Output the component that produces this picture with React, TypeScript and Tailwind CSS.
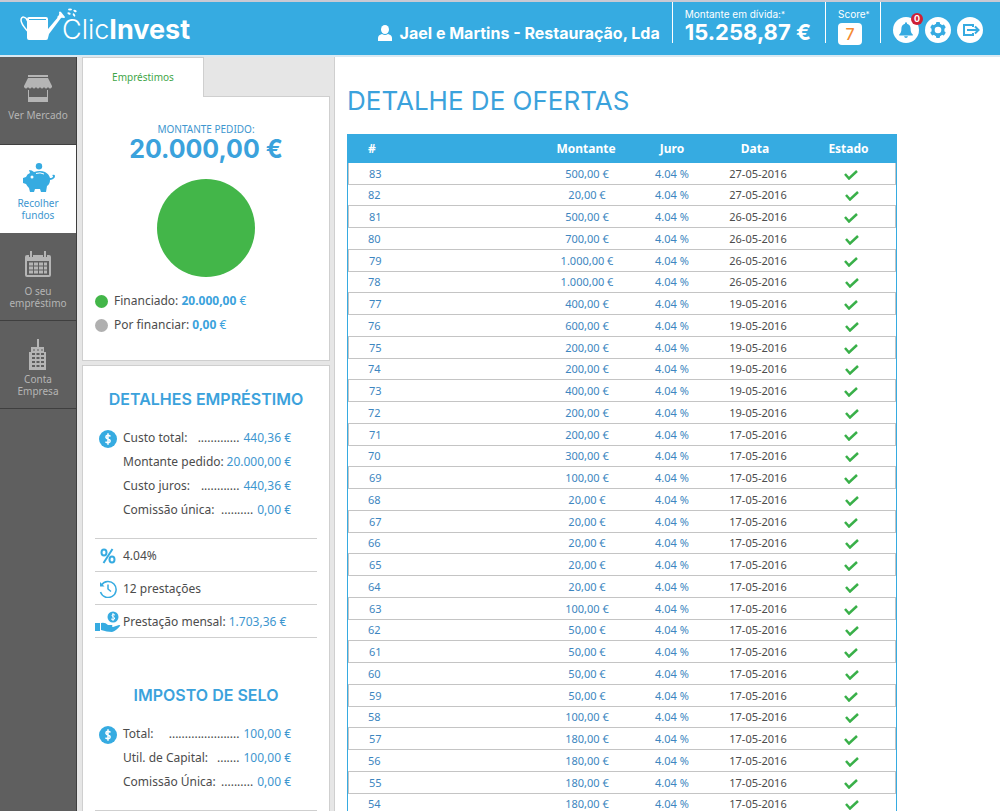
import type { ReactNode } from "react";

const offers: [number, string, string][] = [
  [83, "500,00", "27-05-2016"],
  [82, "20,00", "27-05-2016"],
  [81, "500,00", "26-05-2016"],
  [80, "700,00", "26-05-2016"],
  [79, "1.000,00", "26-05-2016"],
  [78, "1.000,00", "26-05-2016"],
  [77, "400,00", "19-05-2016"],
  [76, "600,00", "19-05-2016"],
  [75, "200,00", "19-05-2016"],
  [74, "200,00", "19-05-2016"],
  [73, "400,00", "19-05-2016"],
  [72, "200,00", "19-05-2016"],
  [71, "200,00", "17-05-2016"],
  [70, "300,00", "17-05-2016"],
  [69, "100,00", "17-05-2016"],
  [68, "20,00", "17-05-2016"],
  [67, "20,00", "17-05-2016"],
  [66, "20,00", "17-05-2016"],
  [65, "20,00", "17-05-2016"],
  [64, "20,00", "17-05-2016"],
  [63, "100,00", "17-05-2016"],
  [62, "50,00", "17-05-2016"],
  [61, "50,00", "17-05-2016"],
  [60, "50,00", "17-05-2016"],
  [59, "50,00", "17-05-2016"],
  [58, "100,00", "17-05-2016"],
  [57, "180,00", "17-05-2016"],
  [56, "180,00", "17-05-2016"],
  [55, "180,00", "17-05-2016"],
  [54, "180,00", "17-05-2016"],
];

function WateringCan() {
  return (
    <svg width="58" height="34" viewBox="0 0 58 34" fill="white" aria-hidden="true">
      <path d="M7 11q0-2 2-2h17q2 0 2 2v10l11-13 2 2-12 16-1 4q0 2-2 2H9q-2 0-2-2z" />
      <path d="M39 4q1-1 2 0l4 5q0 1-1 1-3-1-5 1l-2-2q3-2 2-5z" />
      <path d="M7.500 13C6 8 1 8 1 12c0 4 3 7 6.500 11" fill="none" stroke="white" strokeWidth="1.500" />
      <path d="M9 11.500h17" stroke="#36abe1" strokeWidth="1" />
      <ellipse cx="50" cy="1.500" rx="2" ry="1" />
      <ellipse cx="55" cy="3" rx="1.800" ry="1" transform="rotate(25 55 3)" />
      <ellipse cx="49" cy="5.500" rx="1.800" ry="1" transform="rotate(25 49 5.500)" />
      <ellipse cx="54" cy="7" rx="1" ry="1.800" transform="rotate(-35 54 7)" />
    </svg>
  );
}

function UserIcon() {
  return (
    <svg width="14" height="16" viewBox="0 0 14 16" fill="white" aria-hidden="true">
      <ellipse cx="7" cy="4.500" rx="4" ry="4.500" />
      <path d="M0 16v-3q0-3 4-4 3 2 6 0 4 1 4 4v3z" />
    </svg>
  );
}

function BellIcon() {
  return (
    <svg width="26" height="26" viewBox="0 0 26 26" aria-hidden="true">
      <path
        d="M12 5.500h2v1.200c2.400.6 3.600 2.400 3.600 5 0 3.200.6 4.500 2.200 5.800v1H6.200v-1c1.600-1.300 2.200-2.600 2.200-5.800 0-2.600 1.200-4.400 3.600-5zM11 19.300h4q-.5 1.700-2 1.700t-2-1.700z"
        fill="#36abe1"
      />
    </svg>
  );
}

function GearIcon() {
  return (
    <svg width="26" height="26" viewBox="0 0 26 26" aria-hidden="true">
      <g fill="#36abe1">
        <circle cx="13" cy="13" r="6.500" />
        <rect x="11" y="5" width="4" height="16" rx="1" />
        <rect x="11" y="5" width="4" height="16" rx="1" transform="rotate(60 13 13)" />
        <rect x="11" y="5" width="4" height="16" rx="1" transform="rotate(120 13 13)" />
      </g>
      <circle cx="13" cy="13" r="3.300" fill="white" />
    </svg>
  );
}

function ExitIcon() {
  return (
    <svg width="26" height="26" viewBox="0 0 26 26" fill="none" stroke="#36abe1" strokeWidth="2" aria-hidden="true">
      <path d="M16 10V8H7v10h9v-2M10 13h11M18 9.500l3.500 3.500-3.500 3.500" />
    </svg>
  );
}

function StoreIcon() {
  return (
    <svg width="30" height="28" viewBox="0 0 30 28" fill="currentColor" aria-hidden="true">
      <path d="M5 0h20v2H5zM5 3h20l4 8v1q-2 3-4 0-2 3-4 0-2 3-4 0-2 3-4 0-2 3-4 0-2 3-4 0-2 3-4 0v-1z" />
      <path d="M5 15h1v7h18v-7h1v12H5z" />
    </svg>
  );
}

function PiggyIcon() {
  return (
    <svg width="33" height="30" viewBox="0 0 33 30" fill="#36abe1" aria-hidden="true">
      <circle cx="17" cy="3.200" r="3.200" />
      <path d="M7 7q3 0 5 2 6-2 11 0 4 2 5 6 3 0 3-2l-1-1q3-1 3 1 0 3-5 4 0 4-3 6l-1 6h-5l-1-3h-5l-1 3H8l-1-4q-2-2-3-4l-3-1v-5l3-1q1-3 4-4z" />
      <circle cx="10" cy="14" r="1.500" fill="white" />
      <path d="M14 10.500q4-1.500 8 .5" fill="none" stroke="white" strokeWidth="1" />
    </svg>
  );
}

function CalendarIcon() {
  return (
    <svg width="28" height="27" viewBox="0 0 28 27" aria-hidden="true">
      <path d="M3 4h22q2 0 2 2v18q0 2-2 2H3q-2 0-2-2V6q0-2 2-2z" fill="currentColor" />
      <path d="M7 0v6M21 0v6" stroke="#5f5f5f" strokeWidth="4" />
      <path d="M7 0v6M21 0v6" stroke="currentColor" strokeWidth="2" />
      <path d="M3 10h22v14H3z" fill="#5f5f5f" />
      <path d="M5 13h18M5 17h18M5 21h18" stroke="currentColor" strokeWidth="3" strokeDasharray="4 1" />
    </svg>
  );
}

function BuildingIcon() {
  return (
    <svg width="20" height="32" viewBox="0 0 20 32" aria-hidden="true">
      <path d="M9 0h2v8h5v5h2v18H1V13h2V8h6z" fill="currentColor" />
      <path d="M4 15h12M4 19h12M4 23h12M4 27h12" stroke="#5f5f5f" strokeWidth="2" strokeDasharray="3 1.500" />
      <path d="M5 11h10" stroke="#5f5f5f" strokeWidth="1" strokeDasharray="2 2" />
    </svg>
  );
}

function DollarIcon() {
  return (
    <svg width="18" height="18" viewBox="0 0 18 18" fill="none" stroke="white" aria-hidden="true">
      <circle cx="9" cy="9" r="9" fill="#36abe1" stroke="none" />
      <path d="M11.500 6.300Q9 4.500 7.300 5.800 6 8 9 9q3 1 1.800 3Q9 13.500 6.400 11.800M9 3.300v11.400" strokeWidth="1.500" />
    </svg>
  );
}

function PercentIcon() {
  return (
    <svg width="16" height="16" viewBox="0 0 16 16" fill="none" stroke="#36abe1" strokeWidth="2" aria-hidden="true">
      <ellipse cx="4" cy="4.500" rx="2.500" ry="3" />
      <ellipse cx="12" cy="11.500" rx="2.500" ry="3" />
      <path d="M12.500 1l-9 14" />
    </svg>
  );
}

function HistoryIcon() {
  return (
    <svg width="18" height="18" viewBox="0 0 18 18" fill="none" stroke="#36abe1" strokeWidth="1.500" aria-hidden="true">
      <path d="M2.500 5A8 8 0 1 1 1.500 12M9 4.500V9l3 2.500" />
      <path d="M1 2v4.500h4.500z" fill="#36abe1" stroke="none" />
    </svg>
  );
}

function HandIcon() {
  return (
    <svg width="26" height="22" viewBox="0 0 26 22" fill="#36abe1" aria-hidden="true">
      <circle cx="18" cy="6" r="5.500" />
      <path d="M20 4q-2-1-3 0 0 1.500 1.500 2T19.500 8Q18 9 16 8M18 2v8" fill="none" stroke="white" strokeWidth="1" />
      <path d="M0 12h5v8H0zM6 12q4-1 7 2h4q1 1 0 2h-5 6l6-2q2 0 1 1-4 5-8 6-5 0-11-2z" />
    </svg>
  );
}

function CheckIcon() {
  return (
    <svg className="inline-block" width="14" height="10" viewBox="0 0 14 10" role="img" aria-label="Aceite">
      <path d="M1 4l4 4.500 8-7.500" fill="none" stroke="#39b049" strokeWidth="2.500" />
    </svg>
  );
}

function NavItem({ icon, lines, active }: { icon: ReactNode; lines: string[]; active?: boolean }) {
  return (
    <a
      href="#"
      className={
        active
          ? "flex h-[88px] flex-col items-center bg-white pt-[18px] text-[#3d96cf]"
          : "flex h-[88px] flex-col items-center border-b border-[#3f3f3f] pt-[18px] text-[#b5b5b5]"
      }
    >
      <span className="flex h-[34px] items-start">{icon}</span>
      <span className="text-center text-[10px] leading-3">
        {lines.map((line) => (
          <span key={line} className="block">
            {line}
          </span>
        ))}
      </span>
    </a>
  );
}

function CostRow({ label, dots, value }: { label: string; dots?: string; value: string }) {
  return (
    <div className="flex h-6 items-center justify-between">
      <dt className="flex grow gap-1 whitespace-nowrap">
        <span>{label}</span>
        {dots && <span className="grow pr-1 text-right">{dots}</span>}
      </dt>
      <dd className="whitespace-nowrap text-[#3d96cf]">{value} €</dd>
    </div>
  );
}

function Fact({ icon, children }: { icon: ReactNode; children: ReactNode }) {
  return (
    <li className="flex h-[33px] items-center border-b border-[#cfcfcf] pt-0.5">
      <span className="flex w-7 shrink-0 justify-center pr-0.5">{icon}</span>
      <span className="whitespace-nowrap">{children}</span>
    </li>
  );
}

function Header() {
  return (
    <header className="flex h-[57px] items-start justify-between border-t-2 border-b-2 border-t-[#c9c9d3] border-b-[#d9e9f2] bg-[#36abe1] text-white">
      <a href="#" className="flex pt-1.5 pl-5" aria-label="ClicInvest">
        <WateringCan />
        <span className="-ml-4 pt-1.5 font-[Inter] text-[27px] leading-8 font-light">
          Clic<b className="font-bold">Invest</b>
        </span>
      </a>
      <div className="flex font-[Inter]">
        <div className="flex h-[41px] items-end gap-2 pr-3">
          <span className="pb-0.5">
            <UserIcon />
          </span>
          <span className="text-base leading-5 font-bold whitespace-nowrap">Jael e Martins - Restauração, Lda</span>
        </div>
        <div className="h-[41px] border-l border-white pt-1.5 pr-3.5 pl-3">
          <p className="text-[10px] leading-3">
            Montante em dívida:<span className="align-top text-[8px]">*</span>
          </p>
          <p className="text-[22px] leading-6 font-bold whitespace-nowrap">15.258,87 €</p>
        </div>
        <div className="h-[41px] w-[55px] border-l border-white pt-1.5 pl-3">
          <p className="text-[10px] leading-3">
            Score<span className="align-top text-[8px]">*</span>
          </p>
          <p className="mt-[3px] flex h-[22px] w-6 items-center justify-center rounded-sm bg-white text-base font-medium text-[#f58a33]">
            7
          </p>
        </div>
        <div className="flex h-[41px] items-end gap-1.5 border-l border-white pr-[17px] pl-3">
          <button type="button" aria-label="Notificações" className="relative rounded-full bg-white">
            <BellIcon />
            <span className="absolute -top-1 -right-1 flex size-3 items-center justify-center rounded-full bg-[#cf2035] text-[9px] font-bold">
              0
            </span>
          </button>
          <button type="button" aria-label="Definições" className="rounded-full bg-white">
            <GearIcon />
          </button>
          <button type="button" aria-label="Sair" className="rounded-full bg-white">
            <ExitIcon />
          </button>
        </div>
      </div>
    </header>
  );
}

function LoanColumn() {
  return (
    <aside className="flex w-[248px] shrink-0 flex-col text-xs text-[#4c4c4c]">
      <button
        type="button"
        className="relative z-10 -mb-px h-10 w-[122px] border border-b-0 border-[#cfcfcf] bg-white text-[10px] text-[#3fa648]"
      >
        Empréstimos
      </button>
      <section className="border border-[#cfcfcf] bg-white px-3 pt-6 pb-[23px]">
        <p className="text-center text-[10px] leading-4 text-[#3d96cf]">MONTANTE PEDIDO:</p>
        <p className="text-center font-[Inter] text-[25px] leading-6 font-bold text-[#3ba2dc]">20.000,00 €</p>
        <div className="mx-auto mt-[18px] size-[98px] rounded-full bg-[#43b649]" />
        <ul className="mt-3">
          <li className="flex h-6 items-center gap-1.5">
            <span className="size-[13px] rounded-full bg-[#43b649]" />
            <span>
              Financiado: <b className="text-[#3ba2dc]">20.000,00</b> <span className="text-[#3ba2dc]">€</span>
            </span>
          </li>
          <li className="flex h-6 items-center gap-1.5">
            <span className="size-[13px] rounded-full bg-[#b0b0b0]" />
            <span>
              Por financiar: <b className="text-[#3ba2dc]">0,00</b> <span className="text-[#3ba2dc]">€</span>
            </span>
          </li>
        </ul>
      </section>
      <section className="mt-1 grow border border-[#cfcfcf] bg-white px-3 pt-[23px]">
        <h2 className="text-center font-[Inter] text-base leading-5 font-semibold text-[#3ba2dc]">
          DETALHES EMPRÉSTIMO
        </h2>
        <div className="mt-[17px] flex border-b border-[#cfcfcf] pb-4">
          <span className="w-7 pt-1 pl-1">
            <DollarIcon />
          </span>
          <dl className="w-[168px]">
            <CostRow label="Custo total:" dots="............." value="440,36" />
            <CostRow label="Montante pedido:" value="20.000,00" />
            <CostRow label="Custo juros:" dots="............" value="440,36" />
            <CostRow label="Comissão única:" dots=".........." value="0,00" />
          </dl>
        </div>
        <ul>
          <Fact icon={<PercentIcon />}>4.04%</Fact>
          <Fact icon={<HistoryIcon />}>12 prestações</Fact>
          <Fact icon={<HandIcon />}>
            Prestação mensal: <span className="text-[#3d96cf]">1.703,36 €</span>
          </Fact>
        </ul>
        <h2 className="mt-[47px] text-center font-[Inter] text-base leading-5 font-semibold text-[#3ba2dc]">
          IMPOSTO DE SELO
        </h2>
        <div className="mt-[17px] flex border-b border-[#cfcfcf] pb-4">
          <span className="w-7 pt-1 pl-1">
            <DollarIcon />
          </span>
          <dl className="w-[168px]">
            <CostRow label="Total:" dots="......................" value="100,00" />
            <CostRow label="Util. de Capital:" dots="......." value="100,00" />
            <CostRow label="Comissão Única:" dots=".........." value="0,00" />
          </dl>
        </div>
      </section>
    </aside>
  );
}

function OffersTable() {
  return (
    <table className="mt-[15px] w-full max-w-[550px] table-fixed border-separate border-spacing-0 border border-[#36abe1] text-center text-[11px] leading-4 text-[#3d86c0]">
      <colgroup>
        <col />
        <col className="w-[86px]" />
        <col className="w-[86px]" />
        <col className="w-[86px]" />
        <col className="w-[95px]" />
      </colgroup>
      <thead>
        <tr className="h-7 bg-[#36abe1] text-xs text-white">
          <th className="pl-5 text-left">#</th>
          <th>Montante</th>
          <th>Juro</th>
          <th className="pr-1.5">Data</th>
          <th>Estado</th>
        </tr>
      </thead>
      <tbody>
        {offers.map(([id, amount, date]) => (
          <tr
            key={id}
            className="h-[22px] nth-[4n+2]:h-[21px] *:border-b *:border-[#c4c4c4] odd:*:first:border-l odd:*:last:border-r"
          >
            <td className="pl-5 text-left">{id}</td>
            <td className="pl-0.5">{amount} €</td>
            <td>4.04 %</td>
            <td className="text-[#4c4c4c]">{date}</td>
            <td className="pl-1.5">
              <CheckIcon />
            </td>
          </tr>
        ))}
      </tbody>
    </table>
  );
}

export default function App() {
  return (
    <div className="flex min-h-screen flex-col bg-[#e6e6e6] font-['Noto_Sans',sans-serif]">
      <Header />
      <div className="flex grow">
        <nav className="w-[77px] shrink-0 border-r border-[#3f3f3f] bg-[#5f5f5f]">
          <NavItem icon={<StoreIcon />} lines={["Ver Mercado"]} />
          <NavItem icon={<PiggyIcon />} lines={["Recolher", "fundos"]} active />
          <NavItem icon={<CalendarIcon />} lines={["O seu", "empréstimo"]} />
          <NavItem icon={<BuildingIcon />} lines={["Conta", "Empresa"]} />
        </nav>
        <div className="flex min-w-0 grow gap-1 pl-[5px]">
          <LoanColumn />
          <main className="min-w-0 grow border-l border-[#cfcfcf] bg-white px-3 pt-[26px]">
            <h1 className="font-[Inter] text-[26px] leading-9 text-[#3ba2dc]">DETALHE DE OFERTAS</h1>
            <OffersTable />
          </main>
        </div>
      </div>
    </div>
  );
}
